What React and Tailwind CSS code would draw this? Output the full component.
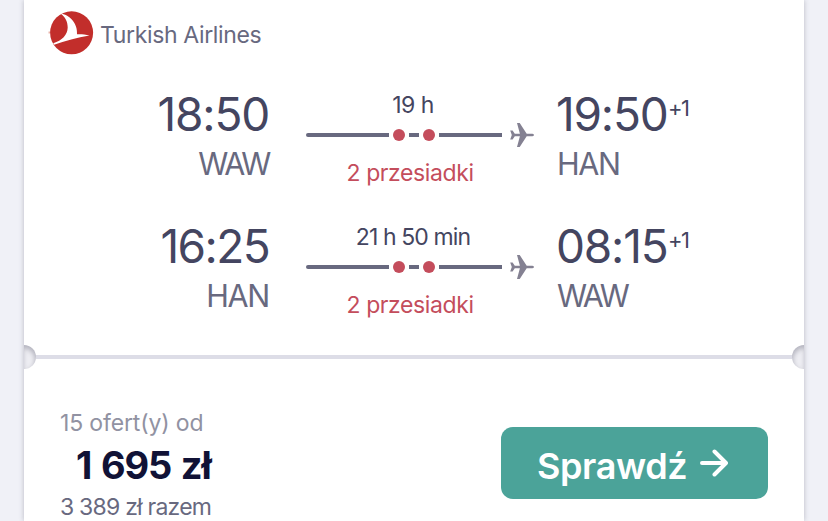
const legs = [
  {
    depart: '18:50', from: 'WAW', duration: '19 h', arrive: '19:50', to: 'HAN',
    departTrack: 'tracking-[-1.2px]', durationTrack: 'tracking-[-0.5px]',
    fromTrack: 'tracking-[-2.3px]', toTrack: 'tracking-[-1.3px]',
  },
  {
    depart: '16:25', from: 'HAN', duration: '21 h 50 min', arrive: '08:15', to: 'WAW',
    departTrack: 'tracking-[-1.6px]', durationTrack: 'tracking-[-0.9px]',
    fromTrack: 'tracking-[-1.3px]', toTrack: 'tracking-[-2.5px]',
  },
];

function AirlineLogo() {
  return (
    <svg className="h-[46px] w-[46px] shrink-0" viewBox="0 0 46 46">
      <circle cx="23.6" cy="22.8" r="21.5" fill="#c22e2b" />
      <path d="M0.500 22.500H2" stroke="#e9b5ac" strokeWidth="2" />
      <path d="M12.500 3.400C21 4.200 30 13 29 24.300C33 24 37 24.500 41.500 25.500C29 27.800 17 30.800 6 34.800L5.300 33.200C14 30.500 19.500 25 19.700 17.500C19.800 11.500 17 6.500 12.500 3.400Z" fill="#fff" />
    </svg>
  );
}

function Plane() {
  return (
    <svg className="h-6 w-6 shrink-0" viewBox="0 0 24 24" fill="#848192">
      <path d="M7 0H9.700L16.700 10.700H22.500Q24 10.900 24 12Q24 13.100 22.500 13.300H16.700L9.700 24H7L9.900 13.300H4.800L2.600 16.500H.2L1.800 12L.2 7.500H2.600L4.800 10.700H9.900Z" />
    </svg>
  );
}

function Leg({ leg }) {
  return (
    <div className="flex h-[132px]">
      <div className="w-[245px] text-right">
        <div className={`h-[50px] text-[46px] leading-[50px] text-[#444560] ${leg.departTrack}`}>{leg.depart}</div>
        <div className={`h-[50px] text-[30.5px] leading-[50px] text-[#68697f] ${leg.fromTrack}`}>{leg.from}</div>
      </div>
      <div className="ml-[37px] w-[228px]">
        <div className={`h-8 w-[214px] text-center text-[23px] leading-8 text-[#444560] ${leg.durationTrack}`}>{leg.duration}</div>
        <div className="flex h-7 items-center">
          <div className="h-1 w-[83px] rounded-l-full bg-[#68697f]" />
          <div className="ml-1 h-3 w-3 rounded-full bg-[#c44d5c]" />
          <div className="ml-1 h-1 w-2.5 bg-[#68697f]" />
          <div className="ml-1 h-3 w-3 rounded-full bg-[#c44d5c]" />
          <div className="ml-1 h-1 w-[63px] bg-[#68697f]" />
          <div className="ml-2"><Plane /></div>
        </div>
        <div className="h-[50px] w-[208px] text-center text-[23px] leading-[48px] tracking-[-0.4px] text-[#c44d5c]">2 przesiadki</div>
      </div>
      <div className="ml-[22px]">
        <div className="flex h-[50px] text-[#444560]">
          <span className="w-[112px] text-[46px] leading-[50px] tracking-[-1.2px]">{leg.arrive}</span>
          <span className="text-[22px] leading-[39px] tracking-[-1.5px]">+1</span>
        </div>
        <div className={`ml-px h-[50px] text-[30.5px] leading-[50px] text-[#68697f] ${leg.toTrack}`}>{leg.to}</div>
      </div>
    </div>
  );
}

export default function App() {
  return (
    <div className="h-[521px] overflow-hidden bg-[#f0f1f7] px-6 font-['Inter',sans-serif] whitespace-nowrap">
      <div className="h-full bg-white shadow-[0_0_5px_rgba(60,60,80,0.3)]">
        <div className="flex h-[89px] items-start pl-6 pt-2.5">
          <AirlineLogo />
          <span className="ml-[6px] mt-[10px] text-[23px] leading-[30px] tracking-[-0.36px] text-[#68697f]">Turkish Airlines</span>
        </div>
        <div className="h-[256px]">
          {legs.map((leg) => <Leg key={leg.depart} leg={leg} />)}
        </div>
        <div className="flex h-6 items-center">
          <div className="h-6 w-3 rounded-r-full bg-[#eeeef3] shadow-[inset_-1px_3px_5px_rgba(60,60,80,0.32)]" />
          <div className="h-1 flex-1 bg-[#dddde7]" />
          <div className="h-6 w-3 rounded-l-full bg-[#eeeef3] shadow-[inset_1px_3px_5px_rgba(60,60,80,0.32)]" />
        </div>
        <div className="flex h-[152px] justify-between pl-9 pr-9">
          <div className="pt-[39px]">
            <div className="h-[30px] text-[23px] leading-[30px] tracking-[-0.15px] text-[#9192a2]">15 ofert(y) od</div>
            <div className="h-[54px] pl-4 text-[38px] font-bold leading-[54px] tracking-[-1.2px] [word-spacing:2px] text-[#111236]">1 695 zł</div>
            <div className="h-[30px] text-[23px] leading-[30px] tracking-[-0.78px] text-[#68697f]">3 389 zł razem</div>
          </div>
          <div className="mt-[58px] flex h-[72px] w-[267px] items-center rounded-xl bg-[#4ba399] pl-9 text-white">
            <span className="w-[151px] pt-1.5 text-[36px] font-semibold leading-[50px] tracking-[-0.4px]">Sprawdź</span>
            <svg className="ml-3 h-7 w-7" viewBox="0 0 28 28" fill="none" stroke="white" strokeWidth="4" strokeLinecap="round" strokeLinejoin="round">
              <path d="M2 14H25M14.500 2.500L26 14L14.500 25.500" />
            </svg>
          </div>
        </div>
      </div>
    </div>
  );
}
